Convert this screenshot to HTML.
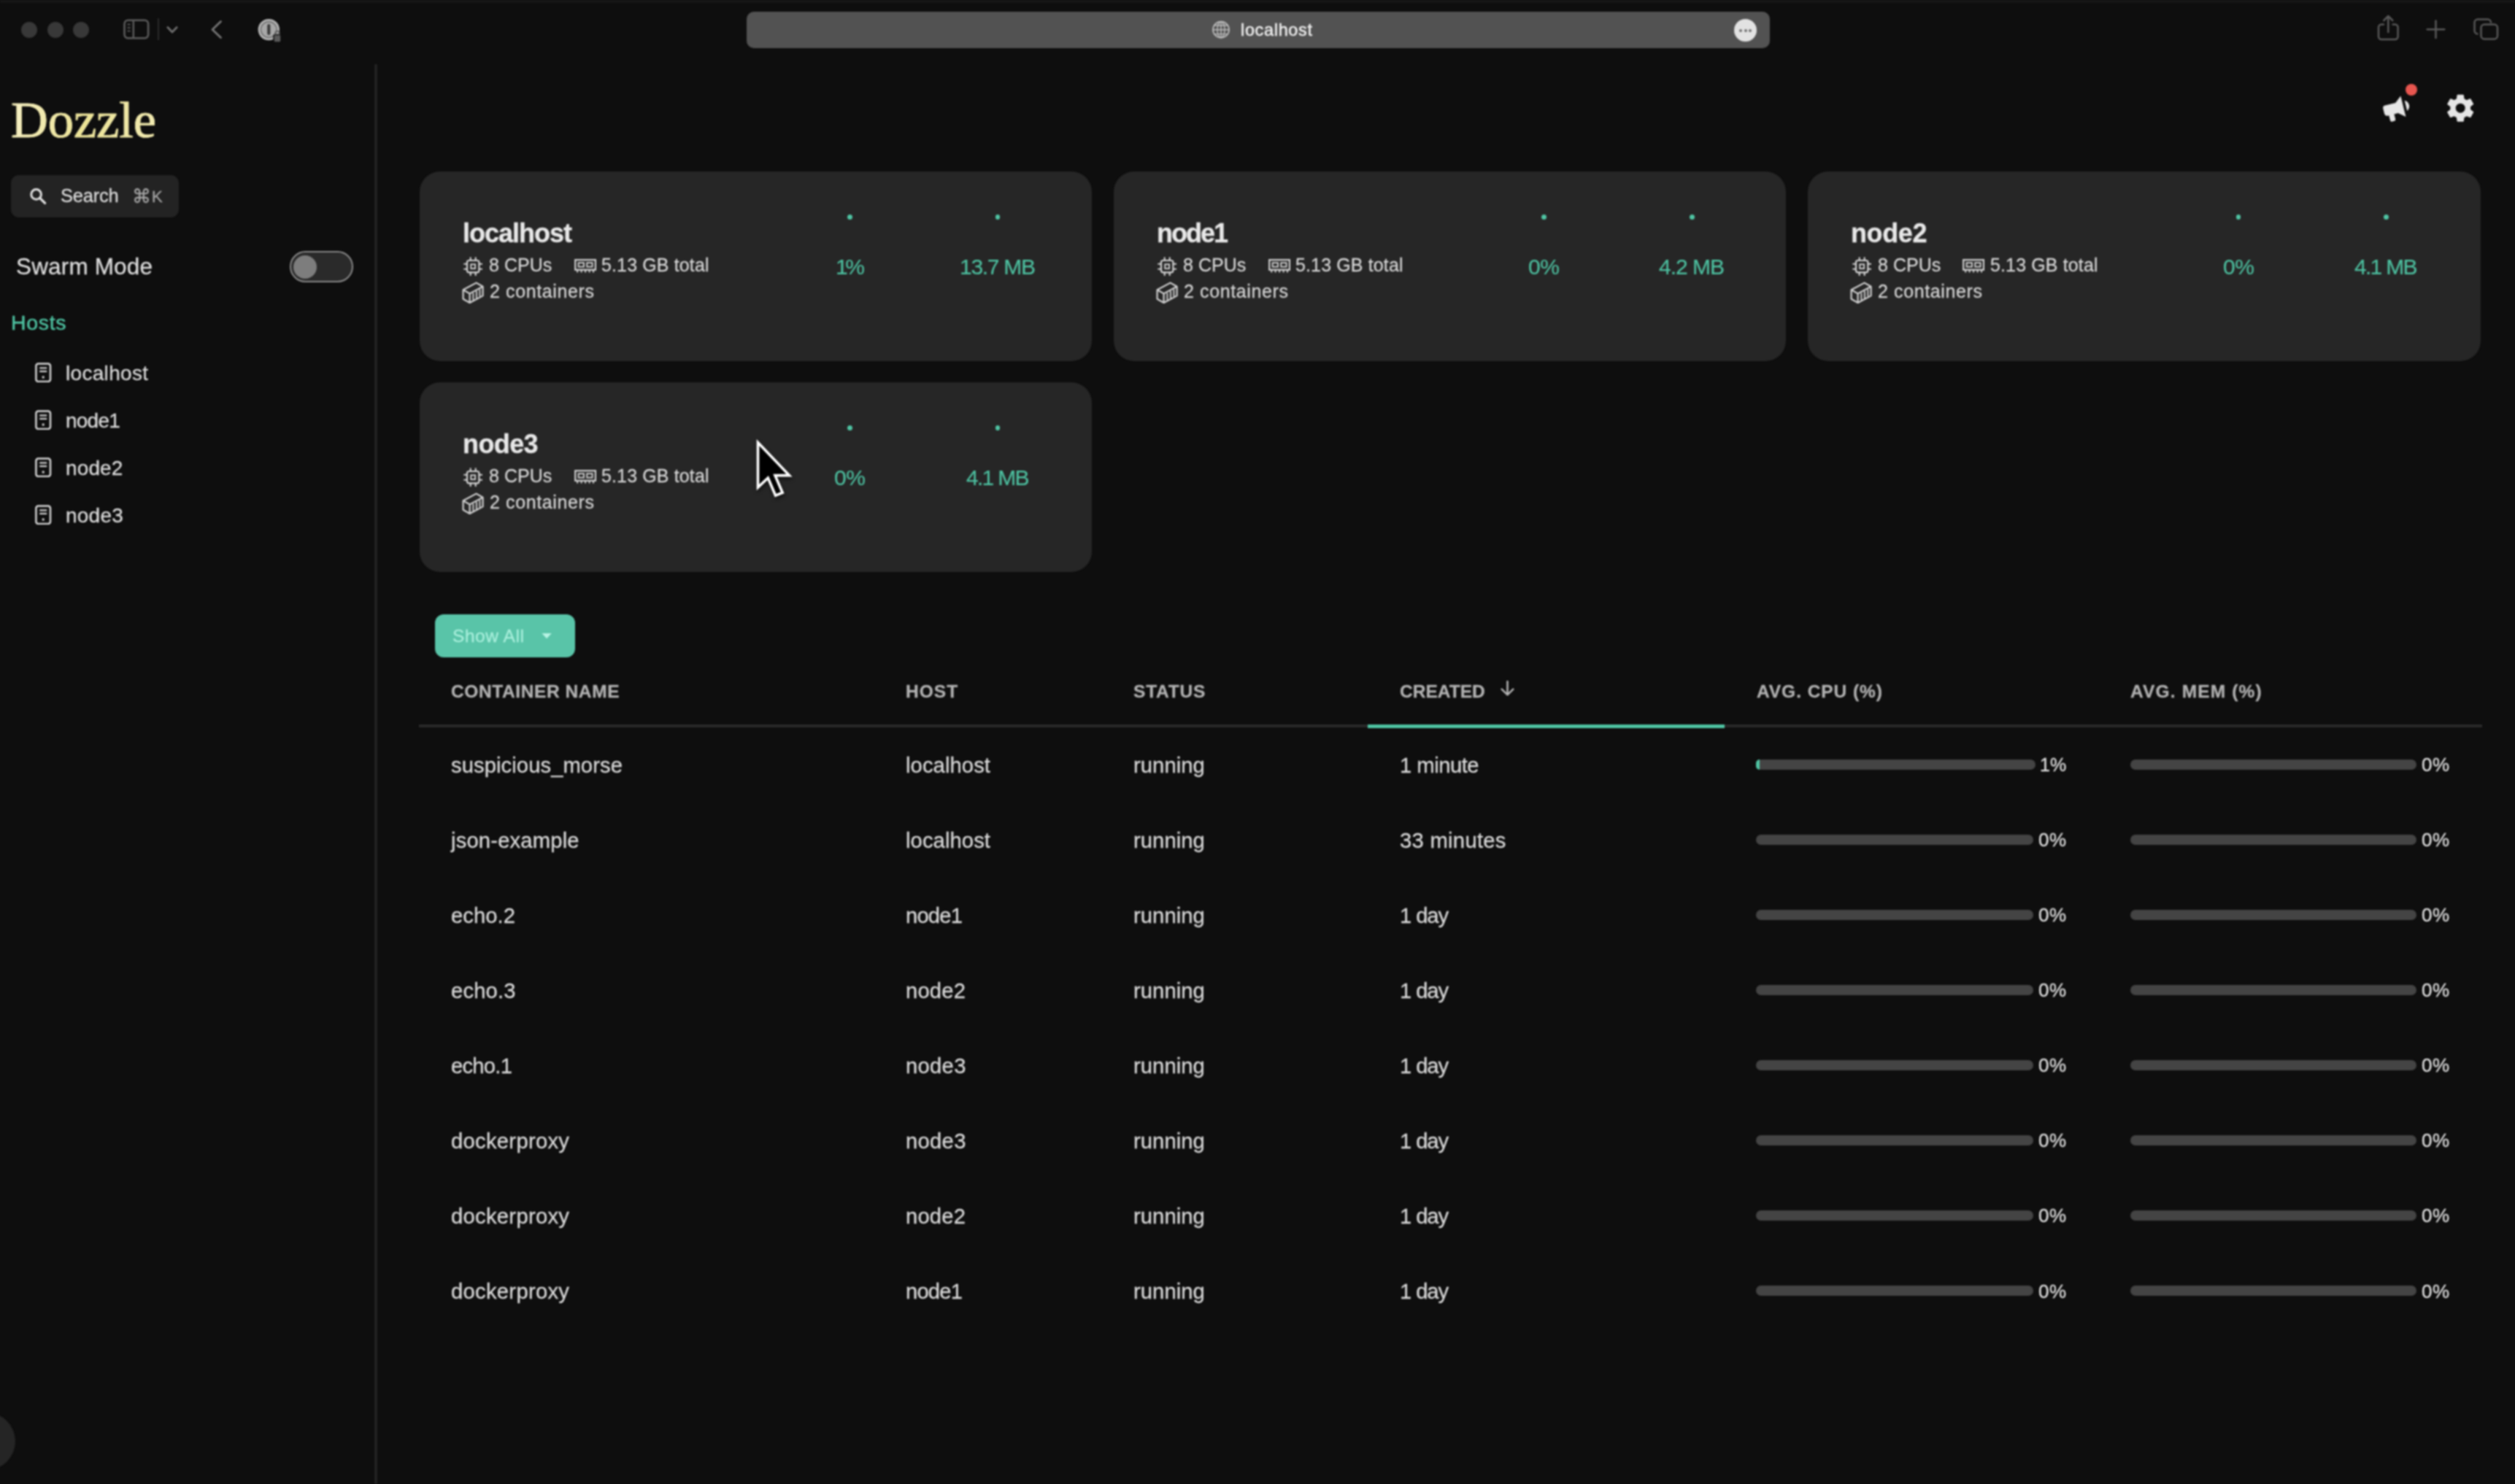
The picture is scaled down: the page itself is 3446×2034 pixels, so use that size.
<!DOCTYPE html>
<html lang="en"><head><meta charset="utf-8"><title>Dozzle</title>
<style>
html,body{margin:0;padding:0;background:#0e0e0e;}
body{width:3446px;height:2034px;position:relative;overflow:hidden;font-family:"Liberation Sans",sans-serif;}
.t{position:absolute;white-space:nowrap;line-height:1;margin:0;-webkit-text-stroke:0.3px currentColor;will-change:transform;}
#wrap{position:absolute;left:0;top:0;width:3446px;height:2034px;filter:blur(0.9px);}
.b{position:absolute;display:block;}
</style></head><body><div id="wrap">
<div class="b" style="left:0.00px;top:0.00px;width:3446.00px;height:4.00px;background:#171717;border-radius:0px;"></div>
<div class="b" style="left:28.90px;top:30.00px;width:22.00px;height:22.00px;background:#383838;border-radius:11px;"></div>
<div class="b" style="left:64.60px;top:30.00px;width:22.00px;height:22.00px;background:#383838;border-radius:11px;"></div>
<div class="b" style="left:100.40px;top:30.00px;width:22.00px;height:22.00px;background:#383838;border-radius:11px;"></div>
<svg class="b" style="left:166.00px;top:23.00px;" width="42.00" height="34.00" viewBox="166 23 42 34" fill="none"><rect x="170.5" y="27.8" width="32.6" height="24.4" rx="5" stroke="#5c5c5c" stroke-width="2.6"/><line x1="182.8" y1="28" x2="182.8" y2="52" stroke="#5c5c5c" stroke-width="2.4"/><line x1="174.5" y1="33.5" x2="178.6" y2="33.5" stroke="#5c5c5c" stroke-width="1.8"/><line x1="174.5" y1="38" x2="178.6" y2="38" stroke="#5c5c5c" stroke-width="1.8"/><line x1="174.5" y1="42.5" x2="178.6" y2="42.5" stroke="#5c5c5c" stroke-width="1.8"/></svg>
<div class="b" style="left:216.30px;top:24.50px;width:2.00px;height:30.00px;background:#2b2b2b;border-radius:0px;"></div>
<svg class="b" style="left:224.00px;top:30.00px;" width="24.00" height="22.00" viewBox="224 30 24 22" fill="none"><polyline points="229.8,37.5 236,44 242.2,37.5" stroke="#6e6e6e" stroke-width="2.8" stroke-linecap="round" stroke-linejoin="round"/></svg>
<svg class="b" style="left:284.00px;top:24.00px;" width="26.00" height="34.00" viewBox="284 24 26 34" fill="none"><polyline points="302.5,29.5 291,40.5 302.5,51.5" stroke="#767676" stroke-width="2.8" stroke-linecap="round" stroke-linejoin="round"/></svg>
<svg class="b" style="left:350.00px;top:22.00px;" width="40.00" height="40.00" viewBox="350 22 40 40" fill="none"><circle cx="368.3" cy="40.6" r="14.7" fill="#b4b4b4"/><circle cx="368.3" cy="40.6" r="11.6" fill="#6a6a6a"/><circle cx="368.3" cy="40.6" r="10.2" fill="#a8a8a8"/><rect x="366.2" y="33" width="4.2" height="15" rx="2" fill="#3a3a3a"/><rect x="375" y="47.5" width="10" height="10.5" rx="2" fill="#5a5a5a" stroke="#0e0e0e" stroke-width="1.5"/><path d="M377.3 47.5 v-2.2 a2.7 2.7 0 0 1 5.4 0 v2.2" stroke="#5a5a5a" stroke-width="1.8"/></svg>
<div class="b" style="left:1023.00px;top:15.50px;width:1402.00px;height:50.00px;background:#525252;border-radius:10px;"></div>
<svg class="b" style="left:1659.00px;top:27.00px;" width="28.00" height="28.00" viewBox="1659 27 28 28" fill="none"><circle cx="1673" cy="40.7" r="11" stroke="#bdbdbd" stroke-width="1.8"/><ellipse cx="1673" cy="40.7" rx="5" ry="11" stroke="#bdbdbd" stroke-width="1.5"/><line x1="1673" y1="29.7" x2="1673" y2="51.7" stroke="#bdbdbd" stroke-width="1.5"/><line x1="1662" y1="40.7" x2="1684" y2="40.7" stroke="#bdbdbd" stroke-width="1.5"/><path d="M1664 34.8 h18 M1664 46.6 h18" stroke="#bdbdbd" stroke-width="1.4"/></svg>
<div class="t" style="left:1700.00px;top:30.09px;font-size:23.4px;color:#f0f0f0;font-weight:400;font-family:'Liberation Sans',sans-serif;letter-spacing:0.706px;-webkit-text-stroke:0.5px currentColor;">localhost</div>
<div class="b" style="left:2376.20px;top:26.20px;width:31.00px;height:31.00px;background:#e2e2e2;border-radius:16px;"></div>
<div class="b" style="left:2383.30px;top:39.80px;width:3.80px;height:3.80px;background:#707070;border-radius:2px;"></div>
<div class="b" style="left:2389.80px;top:39.80px;width:3.80px;height:3.80px;background:#707070;border-radius:2px;"></div>
<div class="b" style="left:2396.30px;top:39.80px;width:3.80px;height:3.80px;background:#707070;border-radius:2px;"></div>
<svg class="b" style="left:3252.00px;top:16.00px;" width="42.00" height="44.00" viewBox="3252 16 42 44" fill="none"><path d="M3266 33.5 h-3 a4 4 0 0 0 -4 4 v12.5 a4 4 0 0 0 4 4 h18.6 a4 4 0 0 0 4 -4 v-12.5 a4 4 0 0 0 -4 -4 h-3" stroke="#585858" stroke-width="2.5" stroke-linecap="round"/><path d="M3272.3 44 V22.5 M3266.3 28 l6 -6 l6 6" stroke="#585858" stroke-width="2.5" stroke-linecap="round" stroke-linejoin="round"/></svg>
<svg class="b" style="left:3322.00px;top:25.00px;" width="32.00" height="32.00" viewBox="3322 25 32 32" fill="none"><path d="M3337.5 28.5 v23.5 M3325.7 40.2 h23.6" stroke="#585858" stroke-width="2.6" stroke-linecap="round"/></svg>
<svg class="b" style="left:3386.00px;top:21.00px;" width="42.00" height="38.00" viewBox="3386 21 42 38" fill="none"><rect x="3399.5" y="33.5" width="22.5" height="20" rx="4.5" stroke="#585858" stroke-width="2.5"/><path d="M3395.5 46.5 h-0.5 a4.5 4.5 0 0 1 -4.5 -4.5 v-11 a4.5 4.5 0 0 1 4.5 -4.5 h13.5 a4.5 4.5 0 0 1 4.5 4.5 v0.5" stroke="#585858" stroke-width="2.5"/></svg>
<div class="b" style="left:512.60px;top:88.00px;width:4.00px;height:1946.00px;background:#222222;border-radius:0px;"></div>
<div class="t" style="left:14.90px;top:128.56px;font-size:70.5px;color:#eee3a0;font-weight:400;font-family:'Liberation Serif',serif;letter-spacing:-0.125px;background:linear-gradient(100deg,#f6f0c8 0%,#ece394 50%,#f2ebb4 100%);-webkit-background-clip:text;background-clip:text;color:transparent;-webkit-text-stroke:0.7px #efe7a8;">Dozzle</div>
<div class="b" style="left:15.00px;top:240.30px;width:229.60px;height:57.40px;background:#232323;border-radius:11px;"></div>
<svg class="b" style="left:38.00px;top:254.00px;" width="30.00" height="30.00" viewBox="38 254 30 30" fill="none"><circle cx="49.6" cy="266.4" r="6.8" stroke="#e0e0e0" stroke-width="3"/><line x1="54.8" y1="271.6" x2="61.6" y2="278.4" stroke="#e0e0e0" stroke-width="3.4" stroke-linecap="round"/></svg>
<div class="t" style="left:82.70px;top:256.41px;font-size:25.5px;color:#dcdcdc;font-weight:400;font-family:'Liberation Sans',sans-serif;letter-spacing:-0.239px;">Search</div>
<div class="t" style="left:181.2px;top:256.20px;font-size:26px;color:#a8a8a8;font-family:'DejaVu Sans',sans-serif;line-height:1">⌘</div>
<div class="t" style="left:207.80px;top:258.68px;font-size:22px;color:#a8a8a8;font-weight:400;font-family:'Liberation Sans',sans-serif;letter-spacing:0.000px;">K</div>
<div class="t" style="left:21.70px;top:350.04px;font-size:31.5px;color:#dedede;font-weight:400;font-family:'Liberation Sans',sans-serif;letter-spacing:0.160px;">Swarm Mode</div>
<div class="b" style="left:396.60px;top:343.60px;width:87.20px;height:43.90px;background:#2a2a2a;border-radius:22px;box-sizing:border-box;border:2.6px solid #8a8a8a;"></div>
<div class="b" style="left:402.00px;top:350.00px;width:32.00px;height:32.00px;background:#7d7d7d;border-radius:16px;"></div>
<div class="t" style="left:14.60px;top:428.47px;font-size:28.5px;color:#4fc4a3;font-weight:400;font-family:'Liberation Sans',sans-serif;letter-spacing:0.687px;-webkit-text-stroke:0.45px currentColor;">Hosts</div>
<svg class="b" style="left:48.20px;top:496.60px;" width="22.40" height="27.40" viewBox="0 0 22.4 27.4" fill="none"><rect x="1.4" y="1.4" width="19.6" height="24.6" rx="3" stroke="#d6d6d6" stroke-width="2.5"/><line x1="6.2" y1="7.4" x2="16.2" y2="7.4" stroke="#d6d6d6" stroke-width="2.2"/><line x1="6.2" y1="12" x2="16.2" y2="12" stroke="#d6d6d6" stroke-width="2.2"/><circle cx="11.2" cy="20" r="1.7" fill="#d6d6d6"/></svg>
<div class="t" style="left:90.20px;top:497.70px;font-size:28px;color:#dcdcdc;font-weight:400;font-family:'Liberation Sans',sans-serif;letter-spacing:0.311px;">localhost</div>
<svg class="b" style="left:48.20px;top:561.60px;" width="22.40" height="27.40" viewBox="0 0 22.4 27.4" fill="none"><rect x="1.4" y="1.4" width="19.6" height="24.6" rx="3" stroke="#d6d6d6" stroke-width="2.5"/><line x1="6.2" y1="7.4" x2="16.2" y2="7.4" stroke="#d6d6d6" stroke-width="2.2"/><line x1="6.2" y1="12" x2="16.2" y2="12" stroke="#d6d6d6" stroke-width="2.2"/><circle cx="11.2" cy="20" r="1.7" fill="#d6d6d6"/></svg>
<div class="t" style="left:90.20px;top:562.70px;font-size:28px;color:#dcdcdc;font-weight:400;font-family:'Liberation Sans',sans-serif;letter-spacing:-0.765px;">node1</div>
<svg class="b" style="left:48.20px;top:626.60px;" width="22.40" height="27.40" viewBox="0 0 22.4 27.4" fill="none"><rect x="1.4" y="1.4" width="19.6" height="24.6" rx="3" stroke="#d6d6d6" stroke-width="2.5"/><line x1="6.2" y1="7.4" x2="16.2" y2="7.4" stroke="#d6d6d6" stroke-width="2.2"/><line x1="6.2" y1="12" x2="16.2" y2="12" stroke="#d6d6d6" stroke-width="2.2"/><circle cx="11.2" cy="20" r="1.7" fill="#d6d6d6"/></svg>
<div class="t" style="left:90.20px;top:627.70px;font-size:28px;color:#dcdcdc;font-weight:400;font-family:'Liberation Sans',sans-serif;letter-spacing:0.135px;">node2</div>
<svg class="b" style="left:48.20px;top:691.60px;" width="22.40" height="27.40" viewBox="0 0 22.4 27.4" fill="none"><rect x="1.4" y="1.4" width="19.6" height="24.6" rx="3" stroke="#d6d6d6" stroke-width="2.5"/><line x1="6.2" y1="7.4" x2="16.2" y2="7.4" stroke="#d6d6d6" stroke-width="2.2"/><line x1="6.2" y1="12" x2="16.2" y2="12" stroke="#d6d6d6" stroke-width="2.2"/><circle cx="11.2" cy="20" r="1.7" fill="#d6d6d6"/></svg>
<div class="t" style="left:90.20px;top:692.70px;font-size:28px;color:#dcdcdc;font-weight:400;font-family:'Liberation Sans',sans-serif;letter-spacing:0.235px;">node3</div>
<div class="b" style="left:-57.80px;top:1935.90px;width:79.00px;height:79.00px;background:#252525;border-radius:40px;"></div>
<svg class="b" style="left:3262.00px;top:126.00px;" width="44.00" height="44.00" viewBox="0 0 24 24" fill="none"><g transform="rotate(-14 12 12)"><path fill="#e6e6e6" d="M12,8H4A2,2 0 0,0 2,10V14A2,2 0 0,0 4,16H5V20A1,1 0 0,0 6,21H8A1,1 0 0,0 9,20V16H12L17,20V4L12,8M21.5,12C21.5,13.71 20.54,15.26 19,16V8C20.53,8.75 21.5,10.3 21.5,12Z"/></g></svg>
<div class="b" style="left:3296.00px;top:115.20px;width:16.00px;height:16.00px;background:#e8564f;border-radius:8px;"></div>
<svg class="b" style="left:3349.00px;top:125.50px;" width="44.40" height="44.40" viewBox="0 0 24 24" fill="none"><path fill="#e6e6e6" d="M12,15.5A3.5,3.5 0 0,1 8.5,12A3.5,3.5 0 0,1 12,8.5A3.5,3.5 0 0,1 15.5,12A3.5,3.5 0 0,1 12,15.5M19.43,12.97C19.47,12.65 19.5,12.33 19.5,12C19.5,11.67 19.47,11.34 19.43,11L21.54,9.37C21.73,9.22 21.78,8.95 21.66,8.73L19.66,5.27C19.54,5.05 19.27,4.96 19.05,5.05L16.56,6.05C16.04,5.66 15.5,5.32 14.87,5.07L14.5,2.42C14.46,2.18 14.25,2 14,2H10C9.75,2 9.54,2.18 9.5,2.42L9.13,5.07C8.5,5.32 7.96,5.66 7.44,6.05L4.95,5.05C4.73,4.96 4.46,5.05 4.34,5.27L2.34,8.73C2.21,8.95 2.27,9.22 2.46,9.37L4.57,11C4.53,11.34 4.5,11.67 4.5,12C4.5,12.33 4.53,12.65 4.57,12.97L2.46,14.63C2.27,14.78 2.21,15.05 2.34,15.27L4.34,18.73C4.46,18.95 4.73,19.03 4.95,18.95L7.44,17.94C7.96,18.34 8.5,18.68 9.13,18.93L9.5,21.58C9.54,21.82 9.75,22 10,22H14C14.25,22 14.46,21.82 14.5,21.58L14.87,18.93C15.5,18.67 16.04,18.34 16.56,17.94L19.05,18.95C19.27,19.03 19.54,18.95 19.66,18.73L21.66,15.27C21.78,15.05 21.73,14.78 21.54,14.63L19.43,12.97Z"/></svg>
<div class="b" style="left:574.50px;top:235.30px;width:921.50px;height:259.80px;background:#262626;border-radius:28px;"></div>
<div class="t" style="left:633.50px;top:301.63px;font-size:36px;color:#e8e8e8;font-weight:700;font-family:'Liberation Sans',sans-serif;letter-spacing:-1.004px;">localhost</div>
<svg class="b" style="left:635.00px;top:352.00px;" width="26.40" height="26.40" viewBox="0 0 26.4 26.4" fill="none"><rect x="5" y="5" width="16.4" height="16.4" rx="2.6" stroke="#d2d2d2" stroke-width="2.2"/><rect x="10.3" y="10.3" width="5.8" height="5.8" stroke="#d2d2d2" stroke-width="1.9"/><path d="M9.7 1.2v3.8M16.7 1.2v3.8M9.7 21.4v3.8M16.7 21.4v3.8M1.2 9.7h3.8M1.2 16.7h3.8M21.4 9.7h3.8M21.4 16.7h3.8" stroke="#d2d2d2" stroke-width="2.1" stroke-linecap="round"/></svg>
<div class="t" style="left:670.00px;top:350.54px;font-size:25px;color:#d4d4d4;font-weight:400;font-family:'Liberation Sans',sans-serif;letter-spacing:0.013px;">8 CPUs</div>
<svg class="b" style="left:786.50px;top:354.90px;" width="30.20" height="19.00" viewBox="0 0 30.2 19" fill="none"><rect x="1.2" y="1.2" width="27.8" height="13.6" stroke="#d2d2d2" stroke-width="2.2"/><rect x="5.6" y="5.2" width="7.4" height="5.4" stroke="#d2d2d2" stroke-width="1.9"/><rect x="17.2" y="5.2" width="7.4" height="5.4" stroke="#d2d2d2" stroke-width="1.9"/><path d="M4.2 15v3.4M9.6 15v3.4M15.1 15v3.4M20.6 15v3.4M26 15v3.4" stroke="#d2d2d2" stroke-width="2"/></svg>
<div class="t" style="left:824.00px;top:350.54px;font-size:25px;color:#d4d4d4;font-weight:400;font-family:'Liberation Sans',sans-serif;letter-spacing:0.131px;">5.13 GB total</div>
<svg class="b" style="left:632.50px;top:385.50px;" width="30.20" height="30.60" viewBox="0 0 30.2 30.6" fill="none"><path d="M1.6 11.2 L19.6 1.6 L28.6 6.8 L28.6 19.4 L10.6 29 L1.6 23.8 Z" stroke="#d2d2d2" stroke-width="2.2" stroke-linejoin="round"/><path d="M1.6 11.2 L10.6 16.4 L28.6 6.8 M10.6 16.4 V29" stroke="#d2d2d2" stroke-width="2.2" stroke-linejoin="round"/><path d="M15.4 15.4 v10 M19.9 13 v10 M24.4 10.6 v10" stroke="#d2d2d2" stroke-width="1.9"/></svg>
<div class="t" style="left:670.50px;top:387.14px;font-size:25px;color:#d4d4d4;font-weight:400;font-family:'Liberation Sans',sans-serif;letter-spacing:0.619px;">2 containers</div>
<div class="b" style="left:1161.10px;top:294.10px;width:6.80px;height:6.80px;background:#4fc4a3;border-radius:4px;"></div>
<div class="b" style="left:1363.60px;top:294.10px;width:6.80px;height:6.80px;background:#4fc4a3;border-radius:4px;"></div>
<div class="t" style="left:1144.50px;top:351.41px;font-size:30px;color:#4dc0a0;font-weight:400;font-family:'Liberation Sans',sans-serif;letter-spacing:-3.359px;-webkit-text-stroke:0.2px currentColor;">1%</div>
<div class="t" style="left:1315.00px;top:351.41px;font-size:30px;color:#4dc0a0;font-weight:400;font-family:'Liberation Sans',sans-serif;letter-spacing:-1.287px;-webkit-text-stroke:0.2px currentColor;">13.7 MB</div>
<div class="b" style="left:1525.70px;top:235.30px;width:921.50px;height:259.80px;background:#262626;border-radius:28px;"></div>
<div class="t" style="left:1584.70px;top:301.63px;font-size:36px;color:#e8e8e8;font-weight:700;font-family:'Liberation Sans',sans-serif;letter-spacing:-2.004px;">node1</div>
<svg class="b" style="left:1586.20px;top:352.00px;" width="26.40" height="26.40" viewBox="0 0 26.4 26.4" fill="none"><rect x="5" y="5" width="16.4" height="16.4" rx="2.6" stroke="#d2d2d2" stroke-width="2.2"/><rect x="10.3" y="10.3" width="5.8" height="5.8" stroke="#d2d2d2" stroke-width="1.9"/><path d="M9.7 1.2v3.8M16.7 1.2v3.8M9.7 21.4v3.8M16.7 21.4v3.8M1.2 9.7h3.8M1.2 16.7h3.8M21.4 9.7h3.8M21.4 16.7h3.8" stroke="#d2d2d2" stroke-width="2.1" stroke-linecap="round"/></svg>
<div class="t" style="left:1621.20px;top:350.54px;font-size:25px;color:#d4d4d4;font-weight:400;font-family:'Liberation Sans',sans-serif;letter-spacing:0.013px;">8 CPUs</div>
<svg class="b" style="left:1737.70px;top:354.90px;" width="30.20" height="19.00" viewBox="0 0 30.2 19" fill="none"><rect x="1.2" y="1.2" width="27.8" height="13.6" stroke="#d2d2d2" stroke-width="2.2"/><rect x="5.6" y="5.2" width="7.4" height="5.4" stroke="#d2d2d2" stroke-width="1.9"/><rect x="17.2" y="5.2" width="7.4" height="5.4" stroke="#d2d2d2" stroke-width="1.9"/><path d="M4.2 15v3.4M9.6 15v3.4M15.1 15v3.4M20.6 15v3.4M26 15v3.4" stroke="#d2d2d2" stroke-width="2"/></svg>
<div class="t" style="left:1775.20px;top:350.54px;font-size:25px;color:#d4d4d4;font-weight:400;font-family:'Liberation Sans',sans-serif;letter-spacing:0.131px;">5.13 GB total</div>
<svg class="b" style="left:1583.70px;top:385.50px;" width="30.20" height="30.60" viewBox="0 0 30.2 30.6" fill="none"><path d="M1.6 11.2 L19.6 1.6 L28.6 6.8 L28.6 19.4 L10.6 29 L1.6 23.8 Z" stroke="#d2d2d2" stroke-width="2.2" stroke-linejoin="round"/><path d="M1.6 11.2 L10.6 16.4 L28.6 6.8 M10.6 16.4 V29" stroke="#d2d2d2" stroke-width="2.2" stroke-linejoin="round"/><path d="M15.4 15.4 v10 M19.9 13 v10 M24.4 10.6 v10" stroke="#d2d2d2" stroke-width="1.9"/></svg>
<div class="t" style="left:1621.70px;top:387.14px;font-size:25px;color:#d4d4d4;font-weight:400;font-family:'Liberation Sans',sans-serif;letter-spacing:0.619px;">2 containers</div>
<div class="b" style="left:2112.30px;top:294.10px;width:6.80px;height:6.80px;background:#4fc4a3;border-radius:4px;"></div>
<div class="b" style="left:2314.80px;top:294.10px;width:6.80px;height:6.80px;background:#4fc4a3;border-radius:4px;"></div>
<div class="t" style="left:2094.30px;top:351.41px;font-size:30px;color:#4dc0a0;font-weight:400;font-family:'Liberation Sans',sans-serif;letter-spacing:-0.559px;-webkit-text-stroke:0.2px currentColor;">0%</div>
<div class="t" style="left:2273.20px;top:351.41px;font-size:30px;color:#4dc0a0;font-weight:400;font-family:'Liberation Sans',sans-serif;letter-spacing:-1.008px;-webkit-text-stroke:0.2px currentColor;">4.2 MB</div>
<div class="b" style="left:2477.00px;top:235.30px;width:921.50px;height:259.80px;background:#262626;border-radius:28px;"></div>
<div class="t" style="left:2536.00px;top:301.63px;font-size:36px;color:#e8e8e8;font-weight:700;font-family:'Liberation Sans',sans-serif;letter-spacing:-0.379px;">node2</div>
<svg class="b" style="left:2537.50px;top:352.00px;" width="26.40" height="26.40" viewBox="0 0 26.4 26.4" fill="none"><rect x="5" y="5" width="16.4" height="16.4" rx="2.6" stroke="#d2d2d2" stroke-width="2.2"/><rect x="10.3" y="10.3" width="5.8" height="5.8" stroke="#d2d2d2" stroke-width="1.9"/><path d="M9.7 1.2v3.8M16.7 1.2v3.8M9.7 21.4v3.8M16.7 21.4v3.8M1.2 9.7h3.8M1.2 16.7h3.8M21.4 9.7h3.8M21.4 16.7h3.8" stroke="#d2d2d2" stroke-width="2.1" stroke-linecap="round"/></svg>
<div class="t" style="left:2572.50px;top:350.54px;font-size:25px;color:#d4d4d4;font-weight:400;font-family:'Liberation Sans',sans-serif;letter-spacing:0.013px;">8 CPUs</div>
<svg class="b" style="left:2689.00px;top:354.90px;" width="30.20" height="19.00" viewBox="0 0 30.2 19" fill="none"><rect x="1.2" y="1.2" width="27.8" height="13.6" stroke="#d2d2d2" stroke-width="2.2"/><rect x="5.6" y="5.2" width="7.4" height="5.4" stroke="#d2d2d2" stroke-width="1.9"/><rect x="17.2" y="5.2" width="7.4" height="5.4" stroke="#d2d2d2" stroke-width="1.9"/><path d="M4.2 15v3.4M9.6 15v3.4M15.1 15v3.4M20.6 15v3.4M26 15v3.4" stroke="#d2d2d2" stroke-width="2"/></svg>
<div class="t" style="left:2726.50px;top:350.54px;font-size:25px;color:#d4d4d4;font-weight:400;font-family:'Liberation Sans',sans-serif;letter-spacing:0.131px;">5.13 GB total</div>
<svg class="b" style="left:2535.00px;top:385.50px;" width="30.20" height="30.60" viewBox="0 0 30.2 30.6" fill="none"><path d="M1.6 11.2 L19.6 1.6 L28.6 6.8 L28.6 19.4 L10.6 29 L1.6 23.8 Z" stroke="#d2d2d2" stroke-width="2.2" stroke-linejoin="round"/><path d="M1.6 11.2 L10.6 16.4 L28.6 6.8 M10.6 16.4 V29" stroke="#d2d2d2" stroke-width="2.2" stroke-linejoin="round"/><path d="M15.4 15.4 v10 M19.9 13 v10 M24.4 10.6 v10" stroke="#d2d2d2" stroke-width="1.9"/></svg>
<div class="t" style="left:2573.00px;top:387.14px;font-size:25px;color:#d4d4d4;font-weight:400;font-family:'Liberation Sans',sans-serif;letter-spacing:0.619px;">2 containers</div>
<div class="b" style="left:3063.60px;top:294.10px;width:6.80px;height:6.80px;background:#4fc4a3;border-radius:4px;"></div>
<div class="b" style="left:3266.10px;top:294.10px;width:6.80px;height:6.80px;background:#4fc4a3;border-radius:4px;"></div>
<div class="t" style="left:3045.60px;top:351.41px;font-size:30px;color:#4dc0a0;font-weight:400;font-family:'Liberation Sans',sans-serif;letter-spacing:-0.559px;-webkit-text-stroke:0.2px currentColor;">0%</div>
<div class="t" style="left:3226.30px;top:351.41px;font-size:30px;color:#4dc0a0;font-weight:400;font-family:'Liberation Sans',sans-serif;letter-spacing:-1.728px;-webkit-text-stroke:0.2px currentColor;">4.1 MB</div>
<div class="b" style="left:574.50px;top:524.30px;width:921.50px;height:259.80px;background:#262626;border-radius:28px;"></div>
<div class="t" style="left:633.50px;top:590.63px;font-size:36px;color:#e8e8e8;font-weight:700;font-family:'Liberation Sans',sans-serif;letter-spacing:-0.604px;">node3</div>
<svg class="b" style="left:635.00px;top:641.00px;" width="26.40" height="26.40" viewBox="0 0 26.4 26.4" fill="none"><rect x="5" y="5" width="16.4" height="16.4" rx="2.6" stroke="#d2d2d2" stroke-width="2.2"/><rect x="10.3" y="10.3" width="5.8" height="5.8" stroke="#d2d2d2" stroke-width="1.9"/><path d="M9.7 1.2v3.8M16.7 1.2v3.8M9.7 21.4v3.8M16.7 21.4v3.8M1.2 9.7h3.8M1.2 16.7h3.8M21.4 9.7h3.8M21.4 16.7h3.8" stroke="#d2d2d2" stroke-width="2.1" stroke-linecap="round"/></svg>
<div class="t" style="left:670.00px;top:639.54px;font-size:25px;color:#d4d4d4;font-weight:400;font-family:'Liberation Sans',sans-serif;letter-spacing:0.013px;">8 CPUs</div>
<svg class="b" style="left:786.50px;top:643.90px;" width="30.20" height="19.00" viewBox="0 0 30.2 19" fill="none"><rect x="1.2" y="1.2" width="27.8" height="13.6" stroke="#d2d2d2" stroke-width="2.2"/><rect x="5.6" y="5.2" width="7.4" height="5.4" stroke="#d2d2d2" stroke-width="1.9"/><rect x="17.2" y="5.2" width="7.4" height="5.4" stroke="#d2d2d2" stroke-width="1.9"/><path d="M4.2 15v3.4M9.6 15v3.4M15.1 15v3.4M20.6 15v3.4M26 15v3.4" stroke="#d2d2d2" stroke-width="2"/></svg>
<div class="t" style="left:824.00px;top:639.54px;font-size:25px;color:#d4d4d4;font-weight:400;font-family:'Liberation Sans',sans-serif;letter-spacing:0.131px;">5.13 GB total</div>
<svg class="b" style="left:632.50px;top:674.50px;" width="30.20" height="30.60" viewBox="0 0 30.2 30.6" fill="none"><path d="M1.6 11.2 L19.6 1.6 L28.6 6.8 L28.6 19.4 L10.6 29 L1.6 23.8 Z" stroke="#d2d2d2" stroke-width="2.2" stroke-linejoin="round"/><path d="M1.6 11.2 L10.6 16.4 L28.6 6.8 M10.6 16.4 V29" stroke="#d2d2d2" stroke-width="2.2" stroke-linejoin="round"/><path d="M15.4 15.4 v10 M19.9 13 v10 M24.4 10.6 v10" stroke="#d2d2d2" stroke-width="1.9"/></svg>
<div class="t" style="left:670.50px;top:676.14px;font-size:25px;color:#d4d4d4;font-weight:400;font-family:'Liberation Sans',sans-serif;letter-spacing:0.619px;">2 containers</div>
<div class="b" style="left:1161.10px;top:583.10px;width:6.80px;height:6.80px;background:#4fc4a3;border-radius:4px;"></div>
<div class="b" style="left:1363.60px;top:583.10px;width:6.80px;height:6.80px;background:#4fc4a3;border-radius:4px;"></div>
<div class="t" style="left:1143.10px;top:640.40px;font-size:30px;color:#4dc0a0;font-weight:400;font-family:'Liberation Sans',sans-serif;letter-spacing:-0.559px;-webkit-text-stroke:0.2px currentColor;">0%</div>
<div class="t" style="left:1323.80px;top:640.40px;font-size:30px;color:#4dc0a0;font-weight:400;font-family:'Liberation Sans',sans-serif;letter-spacing:-1.728px;-webkit-text-stroke:0.2px currentColor;">4.1 MB</div>
<div class="b" style="left:595.50px;top:842.00px;width:192.00px;height:59.00px;background:#59c4a8;border-radius:12px;"></div>
<div class="t" style="left:620.00px;top:859.66px;font-size:24.5px;color:#a8eedb;font-weight:400;font-family:'Liberation Sans',sans-serif;letter-spacing:0.576px;">Show All</div>
<svg class="b" style="left:741.00px;top:865.00px;" width="16.00" height="14.00" viewBox="0 0 16 14" fill="none"><path d="M1.4 3 h13.4 l-6.7 7.2 z" fill="#b8f3e4"/></svg>
<div class="t" style="left:618.20px;top:936.06px;font-size:24.5px;color:#b2b2b2;font-weight:700;font-family:'Liberation Sans',sans-serif;letter-spacing:0.595px;">CONTAINER NAME</div>
<div class="t" style="left:1241.40px;top:936.06px;font-size:24.5px;color:#b2b2b2;font-weight:700;font-family:'Liberation Sans',sans-serif;letter-spacing:1.014px;">HOST</div>
<div class="t" style="left:1553.40px;top:936.06px;font-size:24.5px;color:#b2b2b2;font-weight:700;font-family:'Liberation Sans',sans-serif;letter-spacing:0.787px;">STATUS</div>
<div class="t" style="left:1918.20px;top:936.06px;font-size:24.5px;color:#b2b2b2;font-weight:700;font-family:'Liberation Sans',sans-serif;letter-spacing:0.016px;">CREATED</div>
<div class="t" style="left:2407.00px;top:936.06px;font-size:24.5px;color:#b2b2b2;font-weight:700;font-family:'Liberation Sans',sans-serif;letter-spacing:0.952px;">AVG. CPU (%)</div>
<div class="t" style="left:2919.00px;top:936.06px;font-size:24.5px;color:#b2b2b2;font-weight:700;font-family:'Liberation Sans',sans-serif;letter-spacing:1.159px;">AVG. MEM (%)</div>
<svg class="b" style="left:2052.00px;top:926.00px;" width="26.00" height="30.00" viewBox="0 0 26 30" fill="none"><path d="M13.5 8 v18 M5.7 18.6 l7.8 7.8 l7.8 -7.8" stroke="#b2b2b2" stroke-width="2.6" stroke-linecap="round" stroke-linejoin="round"/></svg>
<div class="b" style="left:574.00px;top:993.40px;width:2826.50px;height:4.00px;background:#2a2a2a;border-radius:0px;"></div>
<div class="b" style="left:1874.00px;top:993.00px;width:489.40px;height:4.60px;background:#4fc4a3;border-radius:0px;"></div>
<div class="t" style="left:618.00px;top:1034.88px;font-size:29.2px;color:#dadada;font-weight:400;font-family:'Liberation Sans',sans-serif;letter-spacing:0.087px;">suspicious_morse</div>
<div class="t" style="left:1241.40px;top:1034.88px;font-size:29.2px;color:#dadada;font-weight:400;font-family:'Liberation Sans',sans-serif;letter-spacing:0.094px;">localhost</div>
<div class="t" style="left:1553.40px;top:1034.88px;font-size:29.2px;color:#dadada;font-weight:400;font-family:'Liberation Sans',sans-serif;letter-spacing:0.065px;">running</div>
<div class="t" style="left:1918.20px;top:1034.88px;font-size:29.2px;color:#dadada;font-weight:400;font-family:'Liberation Sans',sans-serif;letter-spacing:-0.485px;">1 minute</div>
<div class="b" style="left:2405.50px;top:1040.80px;width:383.10px;height:14.00px;background:#444444;border-radius:7px;"></div>
<div class="b" style="left:2405.50px;top:1040.80px;width:5.00px;height:14.00px;background:#4fc4a3;border-radius:7px;border-radius:7px 0 0 7px;"></div>
<div class="t" style="left:2795.37px;top:1036.04px;font-size:25px;color:#e2e2e2;font-weight:400;font-family:'Liberation Sans',sans-serif;letter-spacing:0.000px;">1%</div>
<div class="b" style="left:2919.00px;top:1040.80px;width:391.50px;height:14.00px;background:#444444;border-radius:7px;"></div>
<div class="t" style="left:3318.10px;top:1035.19px;font-size:26px;color:#e2e2e2;font-weight:400;font-family:'Liberation Sans',sans-serif;letter-spacing:0.622px;">0%</div>
<div class="t" style="left:618.00px;top:1137.93px;font-size:29.2px;color:#dadada;font-weight:400;font-family:'Liberation Sans',sans-serif;letter-spacing:0.176px;">json-example</div>
<div class="t" style="left:1241.40px;top:1137.93px;font-size:29.2px;color:#dadada;font-weight:400;font-family:'Liberation Sans',sans-serif;letter-spacing:0.094px;">localhost</div>
<div class="t" style="left:1553.40px;top:1137.93px;font-size:29.2px;color:#dadada;font-weight:400;font-family:'Liberation Sans',sans-serif;letter-spacing:0.065px;">running</div>
<div class="t" style="left:1918.20px;top:1137.93px;font-size:29.2px;color:#dadada;font-weight:400;font-family:'Liberation Sans',sans-serif;letter-spacing:0.296px;">33 minutes</div>
<div class="b" style="left:2405.50px;top:1143.85px;width:380.00px;height:14.00px;background:#444444;border-radius:7px;"></div>
<div class="t" style="left:2793.30px;top:1138.24px;font-size:26px;color:#e2e2e2;font-weight:400;font-family:'Liberation Sans',sans-serif;letter-spacing:0.622px;">0%</div>
<div class="b" style="left:2919.00px;top:1143.85px;width:391.50px;height:14.00px;background:#444444;border-radius:7px;"></div>
<div class="t" style="left:3318.10px;top:1138.24px;font-size:26px;color:#e2e2e2;font-weight:400;font-family:'Liberation Sans',sans-serif;letter-spacing:0.622px;">0%</div>
<div class="t" style="left:618.00px;top:1240.98px;font-size:29.2px;color:#dadada;font-weight:400;font-family:'Liberation Sans',sans-serif;letter-spacing:0.066px;">echo.2</div>
<div class="t" style="left:1241.40px;top:1240.98px;font-size:29.2px;color:#dadada;font-weight:400;font-family:'Liberation Sans',sans-serif;letter-spacing:-0.800px;">node1</div>
<div class="t" style="left:1553.40px;top:1240.98px;font-size:29.2px;color:#dadada;font-weight:400;font-family:'Liberation Sans',sans-serif;letter-spacing:0.065px;">running</div>
<div class="t" style="left:1918.20px;top:1240.98px;font-size:29.2px;color:#dadada;font-weight:400;font-family:'Liberation Sans',sans-serif;letter-spacing:-1.108px;">1 day</div>
<div class="b" style="left:2405.50px;top:1246.90px;width:380.00px;height:14.00px;background:#444444;border-radius:7px;"></div>
<div class="t" style="left:2793.30px;top:1241.29px;font-size:26px;color:#e2e2e2;font-weight:400;font-family:'Liberation Sans',sans-serif;letter-spacing:0.622px;">0%</div>
<div class="b" style="left:2919.00px;top:1246.90px;width:391.50px;height:14.00px;background:#444444;border-radius:7px;"></div>
<div class="t" style="left:3318.10px;top:1241.29px;font-size:26px;color:#e2e2e2;font-weight:400;font-family:'Liberation Sans',sans-serif;letter-spacing:0.622px;">0%</div>
<div class="t" style="left:618.00px;top:1344.03px;font-size:29.2px;color:#dadada;font-weight:400;font-family:'Liberation Sans',sans-serif;letter-spacing:0.186px;">echo.3</div>
<div class="t" style="left:1241.40px;top:1344.03px;font-size:29.2px;color:#dadada;font-weight:400;font-family:'Liberation Sans',sans-serif;letter-spacing:0.200px;">node2</div>
<div class="t" style="left:1553.40px;top:1344.03px;font-size:29.2px;color:#dadada;font-weight:400;font-family:'Liberation Sans',sans-serif;letter-spacing:0.065px;">running</div>
<div class="t" style="left:1918.20px;top:1344.03px;font-size:29.2px;color:#dadada;font-weight:400;font-family:'Liberation Sans',sans-serif;letter-spacing:-1.108px;">1 day</div>
<div class="b" style="left:2405.50px;top:1349.95px;width:380.00px;height:14.00px;background:#444444;border-radius:7px;"></div>
<div class="t" style="left:2793.30px;top:1344.34px;font-size:26px;color:#e2e2e2;font-weight:400;font-family:'Liberation Sans',sans-serif;letter-spacing:0.622px;">0%</div>
<div class="b" style="left:2919.00px;top:1349.95px;width:391.50px;height:14.00px;background:#444444;border-radius:7px;"></div>
<div class="t" style="left:3318.10px;top:1344.34px;font-size:26px;color:#e2e2e2;font-weight:400;font-family:'Liberation Sans',sans-serif;letter-spacing:0.622px;">0%</div>
<div class="t" style="left:618.00px;top:1447.08px;font-size:29.2px;color:#dadada;font-weight:400;font-family:'Liberation Sans',sans-serif;letter-spacing:-0.734px;">echo.1</div>
<div class="t" style="left:1241.40px;top:1447.08px;font-size:29.2px;color:#dadada;font-weight:400;font-family:'Liberation Sans',sans-serif;letter-spacing:0.300px;">node3</div>
<div class="t" style="left:1553.40px;top:1447.08px;font-size:29.2px;color:#dadada;font-weight:400;font-family:'Liberation Sans',sans-serif;letter-spacing:0.065px;">running</div>
<div class="t" style="left:1918.20px;top:1447.08px;font-size:29.2px;color:#dadada;font-weight:400;font-family:'Liberation Sans',sans-serif;letter-spacing:-1.108px;">1 day</div>
<div class="b" style="left:2405.50px;top:1453.00px;width:380.00px;height:14.00px;background:#444444;border-radius:7px;"></div>
<div class="t" style="left:2793.30px;top:1447.39px;font-size:26px;color:#e2e2e2;font-weight:400;font-family:'Liberation Sans',sans-serif;letter-spacing:0.622px;">0%</div>
<div class="b" style="left:2919.00px;top:1453.00px;width:391.50px;height:14.00px;background:#444444;border-radius:7px;"></div>
<div class="t" style="left:3318.10px;top:1447.39px;font-size:26px;color:#e2e2e2;font-weight:400;font-family:'Liberation Sans',sans-serif;letter-spacing:0.622px;">0%</div>
<div class="t" style="left:618.00px;top:1550.13px;font-size:29.2px;color:#dadada;font-weight:400;font-family:'Liberation Sans',sans-serif;letter-spacing:0.295px;">dockerproxy</div>
<div class="t" style="left:1241.40px;top:1550.13px;font-size:29.2px;color:#dadada;font-weight:400;font-family:'Liberation Sans',sans-serif;letter-spacing:0.300px;">node3</div>
<div class="t" style="left:1553.40px;top:1550.13px;font-size:29.2px;color:#dadada;font-weight:400;font-family:'Liberation Sans',sans-serif;letter-spacing:0.065px;">running</div>
<div class="t" style="left:1918.20px;top:1550.13px;font-size:29.2px;color:#dadada;font-weight:400;font-family:'Liberation Sans',sans-serif;letter-spacing:-1.108px;">1 day</div>
<div class="b" style="left:2405.50px;top:1556.05px;width:380.00px;height:14.00px;background:#444444;border-radius:7px;"></div>
<div class="t" style="left:2793.30px;top:1550.44px;font-size:26px;color:#e2e2e2;font-weight:400;font-family:'Liberation Sans',sans-serif;letter-spacing:0.622px;">0%</div>
<div class="b" style="left:2919.00px;top:1556.05px;width:391.50px;height:14.00px;background:#444444;border-radius:7px;"></div>
<div class="t" style="left:3318.10px;top:1550.44px;font-size:26px;color:#e2e2e2;font-weight:400;font-family:'Liberation Sans',sans-serif;letter-spacing:0.622px;">0%</div>
<div class="t" style="left:618.00px;top:1653.18px;font-size:29.2px;color:#dadada;font-weight:400;font-family:'Liberation Sans',sans-serif;letter-spacing:0.295px;">dockerproxy</div>
<div class="t" style="left:1241.40px;top:1653.18px;font-size:29.2px;color:#dadada;font-weight:400;font-family:'Liberation Sans',sans-serif;letter-spacing:0.200px;">node2</div>
<div class="t" style="left:1553.40px;top:1653.18px;font-size:29.2px;color:#dadada;font-weight:400;font-family:'Liberation Sans',sans-serif;letter-spacing:0.065px;">running</div>
<div class="t" style="left:1918.20px;top:1653.18px;font-size:29.2px;color:#dadada;font-weight:400;font-family:'Liberation Sans',sans-serif;letter-spacing:-1.108px;">1 day</div>
<div class="b" style="left:2405.50px;top:1659.10px;width:380.00px;height:14.00px;background:#444444;border-radius:7px;"></div>
<div class="t" style="left:2793.30px;top:1653.49px;font-size:26px;color:#e2e2e2;font-weight:400;font-family:'Liberation Sans',sans-serif;letter-spacing:0.622px;">0%</div>
<div class="b" style="left:2919.00px;top:1659.10px;width:391.50px;height:14.00px;background:#444444;border-radius:7px;"></div>
<div class="t" style="left:3318.10px;top:1653.49px;font-size:26px;color:#e2e2e2;font-weight:400;font-family:'Liberation Sans',sans-serif;letter-spacing:0.622px;">0%</div>
<div class="t" style="left:618.00px;top:1756.23px;font-size:29.2px;color:#dadada;font-weight:400;font-family:'Liberation Sans',sans-serif;letter-spacing:0.295px;">dockerproxy</div>
<div class="t" style="left:1241.40px;top:1756.23px;font-size:29.2px;color:#dadada;font-weight:400;font-family:'Liberation Sans',sans-serif;letter-spacing:-0.800px;">node1</div>
<div class="t" style="left:1553.40px;top:1756.23px;font-size:29.2px;color:#dadada;font-weight:400;font-family:'Liberation Sans',sans-serif;letter-spacing:0.065px;">running</div>
<div class="t" style="left:1918.20px;top:1756.23px;font-size:29.2px;color:#dadada;font-weight:400;font-family:'Liberation Sans',sans-serif;letter-spacing:-1.108px;">1 day</div>
<div class="b" style="left:2405.50px;top:1762.15px;width:380.00px;height:14.00px;background:#444444;border-radius:7px;"></div>
<div class="t" style="left:2793.30px;top:1756.54px;font-size:26px;color:#e2e2e2;font-weight:400;font-family:'Liberation Sans',sans-serif;letter-spacing:0.622px;">0%</div>
<div class="b" style="left:2919.00px;top:1762.15px;width:391.50px;height:14.00px;background:#444444;border-radius:7px;"></div>
<div class="t" style="left:3318.10px;top:1756.54px;font-size:26px;color:#e2e2e2;font-weight:400;font-family:'Liberation Sans',sans-serif;letter-spacing:0.622px;">0%</div>
<svg class="b" style="left:1028.00px;top:596.00px;filter:drop-shadow(1.5px 3px 2.5px rgba(0,0,0,.55));" width="70.00" height="96.00" viewBox="1028 596 70 96" fill="none"><path d="M1038.5 606.5 L1038.5 668 L1052.3 655 L1062.6 679.2 L1072.2 675.2 L1062 651.6 L1081.5 651.6 Z" fill="#000" stroke="#fff" stroke-width="3.6" stroke-linejoin="miter"/></svg>
</div></body></html>
